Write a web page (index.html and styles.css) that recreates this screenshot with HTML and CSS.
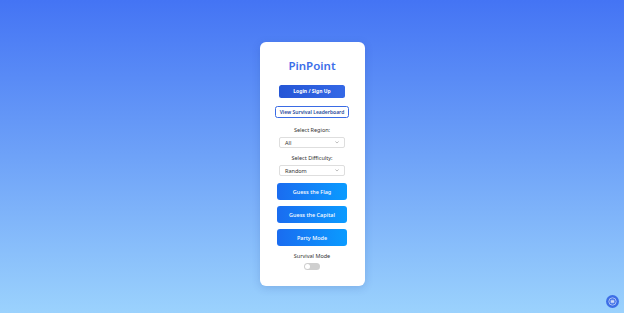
FILE: index.html
```html
<!DOCTYPE html>
<html lang="en">
<head>
<meta charset="utf-8">
<title>PinPoint</title>
<link rel="stylesheet" href="styles.css">
</head>
<body>
<main class="page">
  <section class="card">
    <h1 class="title">PinPoint</h1>
    <button class="btn-login">Login / Sign Up</button>
    <button class="btn-outline">View Survival Leaderboard</button>
    <label class="label">Select Region:</label>
    <div class="select"><span>All</span><svg class="chev" viewBox="0 0 10 6"><path d="M1 1l4 4 4-4" fill="none" stroke="#888" stroke-width="1.4"/></svg></div>
    <label class="label">Select Difficulty:</label>
    <div class="select"><span>Random</span><svg class="chev" viewBox="0 0 10 6"><path d="M1 1l4 4 4-4" fill="none" stroke="#888" stroke-width="1.4"/></svg></div>
    <div class="modes">
      <button class="btn-mode">Guess the Flag</button>
      <button class="btn-mode">Guess the Capital</button>
      <button class="btn-mode">Party Mode</button>
    </div>
    <label class="label survival">Survival Mode</label>
    <div class="toggle"><span class="knob"></span></div>
  </section>
  <button class="fab" aria-label="Menu">
    <svg viewBox="0 0 12 12">
      <circle cx="6" cy="6" r="6" fill="#3d6ee6"/>
      <circle cx="6" cy="6" r="3.4" fill="none" stroke="#c9d8fb" stroke-width="0.7"/>
      <path d="M4.3 4.9h3.4M4.3 6h3.4M4.3 7.1h3.4" stroke="#fff" stroke-width="0.7"/>
    </svg>
  </button>
</main>
</body>
</html>
```
FILE: styles.css
```css
* { box-sizing: border-box; }
html, body { margin: 0; height: 100%; }
body {
  font-family: "Noto Sans", "Open Sans", sans-serif;
  background: linear-gradient(180deg, #4474f4 0%, #6ea2f8 50%, #9bd2fd 100%);
  overflow: hidden;
}
.page {
  height: 313px;
  display: flex;
  justify-content: center;
  padding-top: 42px;
  position: relative;
}
.card {
  width: 105px;
  height: 244px;
  background: #fff;
  border-radius: 6px;
  box-shadow: 0 2px 8px rgba(30, 60, 140, 0.18);
  display: flex;
  flex-direction: column;
  align-items: center;
  padding-top: 16px;
}
.title {
  margin: 0;
  font-size: 11.5px;
  line-height: 16px;
  font-weight: 600;
  color: #3c6ee9;
}
button { font-family: inherit; cursor: pointer; }
.btn-login {
  margin-top: 11px;
  width: 66px;
  height: 13px;
  border: 0;
  border-radius: 2.5px;
  background: linear-gradient(90deg, #2556d6 0%, #3468e6 100%);
  color: #fff;
  font-size: 5px;
  font-weight: 700;
  padding: 0;
  line-height: 13px;
}
.btn-outline {
  margin-top: 8px;
  width: 74px;
  height: 12px;
  border: 1px solid #3a6be4;
  border-radius: 2.5px;
  background: #fff;
  color: #284a9a;
  font-size: 5px;
  font-weight: 600;
  padding: 0;
  line-height: 10px;
}
.label {
  display: block;
  margin-top: 9px;
  font-size: 5.5px;
  line-height: 7px;
  color: #333;
}
.select {
  margin-top: 3px;
  width: 66px;
  height: 11px;
  border: 1px solid #dedede;
  border-radius: 2px;
  display: flex;
  align-items: center;
  justify-content: space-between;
  padding: 0 5px;
  font-size: 5.5px;
  color: #333;
}
.chev { width: 4px; height: 2.5px; display: block; }
.select + .label { margin-top: 7px; }
.modes {
  margin-top: 7px;
  display: flex;
  flex-direction: column;
  gap: 6px;
}
.btn-mode {
  width: 70px;
  height: 17px;
  border: 0;
  border-radius: 3px;
  background: linear-gradient(90deg, #1a6cf0 0%, #0a9bff 100%);
  color: #fff;
  font-size: 5.5px;
  font-weight: 500;
  padding: 0;
}
.survival { margin-top: 7px; }
.toggle {
  margin-top: 3px;
  width: 16px;
  height: 7px;
  border-radius: 4px;
  background: #cfcfcf;
  position: relative;
}
.knob {
  position: absolute;
  left: 1px;
  top: 1px;
  width: 5px;
  height: 5px;
  border-radius: 50%;
  background: #fff;
}
.fab {
  position: absolute;
  right: 5px;
  bottom: 5px;
  width: 13px;
  height: 13px;
  padding: 0;
  border: 0;
  background: none;
  display: block;
}
.fab svg { display: block; width: 13px; height: 13px; }
```
